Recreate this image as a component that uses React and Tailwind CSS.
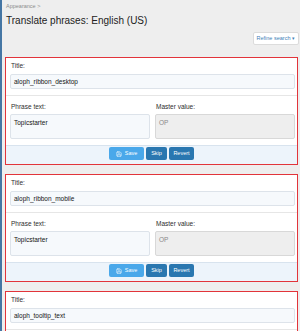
import React from "react";
import { Save } from "lucide-react";

const font = { fontFamily: '"Liberation Sans", Arial, sans-serif' };

function Block({ title, phrase, master }) {
  return (
    <div className="border border-[#e2343a] bg-white">
      <div className="pl-[4px] pr-[2px] pt-[4px] pb-[6px] border-b border-[#e6e6e6]">
        <div className="text-[6.5px] leading-[8px] text-[#2d2d2d] pl-[1px] mb-[4px]">Title:</div>
        <div className="h-[15px] flex items-center border border-[#dde3ea] bg-[#f6f9fc] rounded-[2px] px-[3px] text-[6.5px] text-[#141414]">
          {title}
        </div>
      </div>
      <div className="pl-[4px] pr-[2px] pt-[7px] pb-[6px] grid grid-cols-2 gap-x-[5px]">
        <div>
          <div className="text-[6.5px] leading-[8px] text-[#2d2d2d] pl-[1px] mb-[3px]">Phrase text:</div>
          <div className="h-[25px] border border-[#dde3ea] bg-[#f6f9fc] rounded-[2px] px-[3px] pt-[4px] text-[6.5px] leading-[8px] text-[#141414]">
            {phrase}
          </div>
        </div>
        <div>
          <div className="text-[6.5px] leading-[8px] text-[#2d2d2d] pl-[1px] mb-[3px]">Master value:</div>
          <div className="h-[25px] border border-[#d8d8d8] bg-[#eeeeee] rounded-[2px] px-[3px] pt-[4px] text-[6.5px] leading-[8px] text-[#8a8a8a]">
            {master}
          </div>
        </div>
      </div>
      <div className="border-t border-[#d8e3ee] bg-[#edf4fb] pt-[1px] pb-[4px] flex justify-center gap-[2px]">
        <div className="h-[13px] w-[35px] bg-[#4aa8ea] rounded-[2px] flex items-center justify-center gap-[3px] text-white text-[5.5px]">
          <Save size={6} strokeWidth={2.2} />
          <span>Save</span>
        </div>
        <div className="h-[13px] w-[21px] bg-[#2a77b0] rounded-[2px] flex items-center justify-center text-white text-[5.5px]">
          Skip
        </div>
        <div className="h-[13px] w-[25px] bg-[#2a77b0] rounded-[2px] flex items-center justify-center text-white text-[5.5px]">
          Revert
        </div>
      </div>
    </div>
  );
}

export default function App() {
  return (
    <div
      style={font}
      className="h-[331px] w-[300px] overflow-hidden bg-[#eeeeee] border-l-2 border-[#4576a4] pl-[3px] pr-[2px] pt-[2px]"
    >
      <div className="text-[5.5px] leading-[8px] text-[#8c8c8c] pl-[1px]">Appearance &gt;</div>
      <div className="mt-[4px] text-[10px] leading-[14px] text-[#222222] pl-[1px]">
        Translate phrases: English (US)
      </div>
      <div className="mt-[4px] flex justify-end -mr-[1px]">
        <div className="h-[13px] w-[46px] bg-white border border-[#dcdcdc] rounded-[2px] flex items-center justify-center gap-[2px] text-[5.5px] text-[#3f7fb8]">
          <span>Refine search</span>
          <span className="text-[5px]">▾</span>
        </div>
      </div>
      <div className="mt-[12px] flex flex-col gap-[9px]">
        <Block title="aloph_ribbon_desktop" phrase="Topicstarter" master="OP" />
        <Block title="aloph_ribbon_mobile" phrase="Topicstarter" master="OP" />
        <Block title="aloph_tooltip_text" phrase="Topicstarter" master="OP" />
      </div>
    </div>
  );
}
